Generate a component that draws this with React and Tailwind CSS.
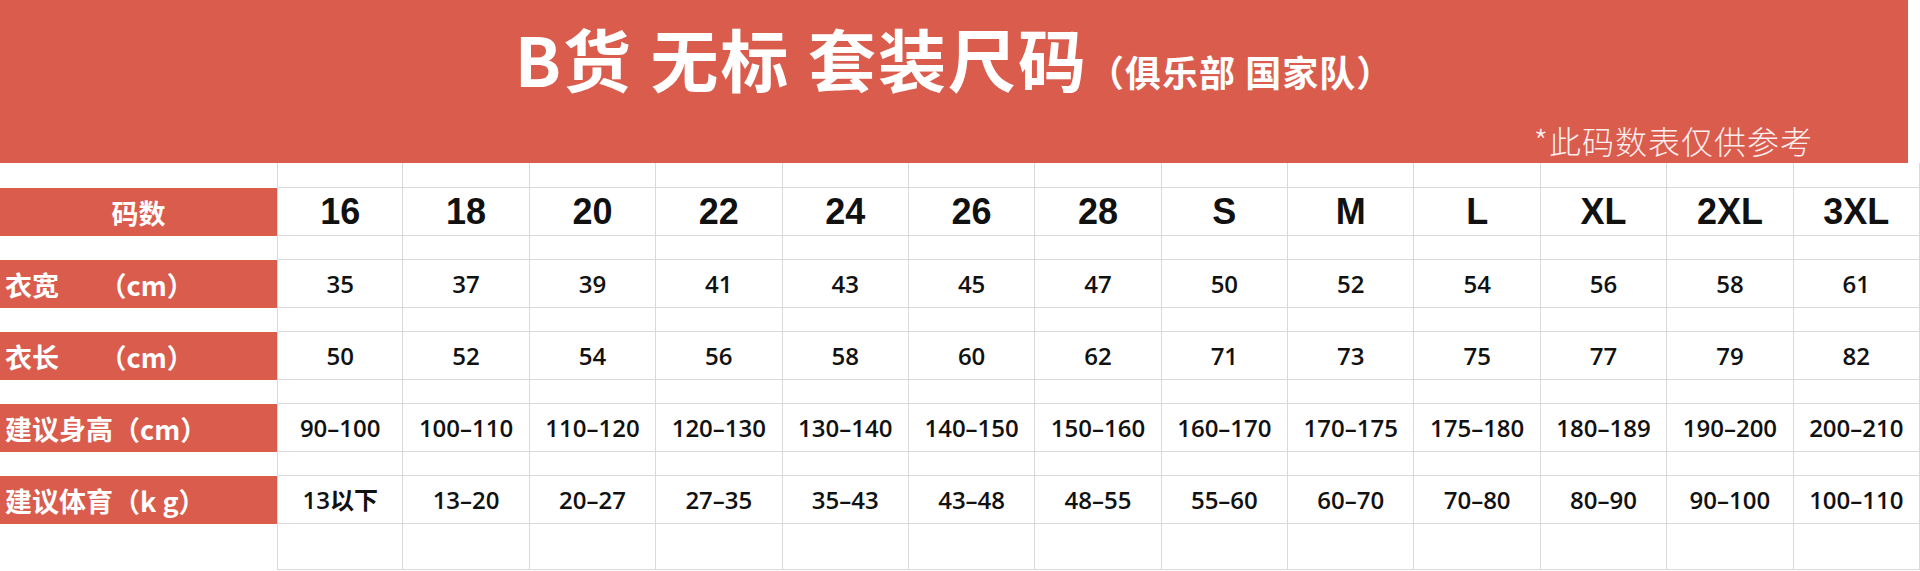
import React from 'react';

const sizes = ['16', '18', '20', '22', '24', '26', '28', 'S', 'M', 'L', 'XL', '2XL', '3XL'];

const rows = [
  { label: '衣宽\u3000\u3000（cm）', values: ['35', '37', '39', '41', '43', '45', '47', '50', '52', '54', '56', '58', '61'] },
  { label: '衣长\u3000\u3000（cm）', values: ['50', '52', '54', '56', '58', '60', '62', '71', '73', '75', '77', '79', '82'] },
  {
    label: '建议身高（cm）',
    values: ['90–100', '100–110', '110–120', '120–130', '130–140', '140–150', '150–160', '160–170', '170–175', '175–180', '180–189', '190–200', '200–210'],
  },
  {
    label: '建议体育（k g）',
    values: ['13以下', '13–20', '20–27', '27–35', '35–43', '43–48', '48–55', '55–60', '60–70', '70–80', '80–90', '90–100', '100–110'],
  },
];

const cell = 'border-r border-b border-[#d9d9d9] flex items-center justify-center';

// one empty table row (label side stays white)
const BlankRow = ({ h }) => (
  <>
    <div className={h} />
    {sizes.map((s, i) => (
      <div key={s} className={`${cell} ${h} ${i === 0 ? 'border-l' : ''}`} />
    ))}
  </>
);

const App = () => {
  return (
    <div className="w-[1920px] h-[571px] bg-white overflow-hidden">
      {/* Header */}
      <div className="h-[163px] mr-[12px] bg-[#d95c4d] flex flex-col pt-[24px] font-['Noto_Sans_CJK_SC',sans-serif] text-white">
        <div className="flex justify-center items-baseline leading-none">
          <span className="text-[68px] font-bold tracking-[2px]">B货&nbsp;无标&nbsp;套装尺码</span>
          <span className="text-[36px] font-bold tracking-[1px]">（俱乐部&nbsp;国家队）</span>
        </div>
        <div className="flex justify-end pr-[95px] mt-[32px]">
          <span className="text-[32px] font-light leading-none text-[#fbeeee] tracking-[1px]">*此码数表仅供参考</span>
        </div>
      </div>

      {/* Size table */}
      <div className="grid grid-cols-[277px_repeat(13,minmax(0,1fr))]">
        <BlankRow h="h-[25px]" />

        <div className="h-[48px] bg-[#d95c4d] flex items-center justify-center text-white text-[27px] font-bold font-['Noto_Sans_CJK_SC',sans-serif] leading-none">
          码数
        </div>
        {sizes.map((s, i) => (
          <div
            key={s}
            className={`${cell} h-[48px] ${i === 0 ? 'border-l' : ''} text-[36px] font-bold text-[#111] font-['Liberation_Sans','Noto_Sans_CJK_SC',sans-serif]`}
          >
            {s}
          </div>
        ))}

        {rows.map((row) => (
          <React.Fragment key={row.label}>
            <BlankRow h="h-[24px]" />
            <div className="h-[48px] bg-[#d95c4d] flex items-center pl-[5px] text-white text-[27px] font-bold font-['Noto_Sans_CJK_SC',sans-serif] leading-none whitespace-pre">
              {row.label}
            </div>
            {row.values.map((v, i) => (
              <div
                key={i}
                className={`${cell} h-[48px] ${i === 0 ? 'border-l' : ''} text-[24px] font-semibold text-[#111] font-['Open_Sans','Noto_Sans_CJK_SC',sans-serif]`}
              >
                {v}
              </div>
            ))}
          </React.Fragment>
        ))}

        <BlankRow h="h-[46px]" />
      </div>
    </div>
  );
};

export default App;
